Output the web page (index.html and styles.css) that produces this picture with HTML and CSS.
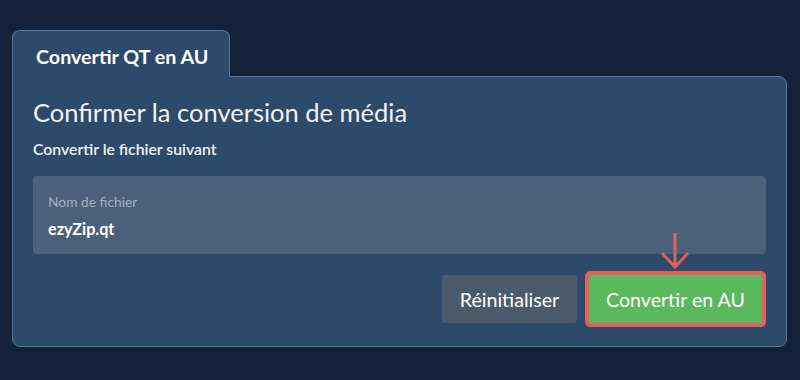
FILE: index.html
```html
<!DOCTYPE html>
<html lang="fr">
<head>
<meta charset="utf-8">
<link rel="stylesheet" href="styles.css">
</head>
<body>
<div class="wrap">
  <div class="tab">Convertir QT en AU</div>
  <div class="panel">
    <h1 class="title">Confirmer la conversion de média</h1>
    <p class="subtitle">Convertir le fichier suivant</p>
    <div class="filebox">
      <div class="label">Nom de fichier</div>
      <div class="value">ezyZip.qt</div>
    </div>
    <div class="actions">
      <button class="btn btn-reset">Réinitialiser</button>
      <div class="convert-wrap">
        <svg class="arrow" width="30" height="38" viewBox="0 0 30 38">
          <path d="M15 1 V35 M2 21 L15 35 L28 21" fill="none" stroke="#e0605a" stroke-width="3"/>
        </svg>
        <button class="btn btn-convert">Convertir en AU</button>
      </div>
    </div>
  </div>
</div>
</body>
</html>
```
FILE: styles.css
```css
html, body {
  margin: 0;
  padding: 0;
  background: #11223a;
  font-family: Lato, "Open Sans", sans-serif;
  color: #ffffff;
}
.wrap {
  padding: 30px 13px 0 12px;
}
.tab {
  position: relative;
  z-index: 2;
  box-sizing: border-box;
  width: 218px;
  height: 47px;
  margin-bottom: -1px;
  padding: 14px 0 0 23px;
  background: #2d4a6b;
  border: 1px solid #5a7595;
  border-bottom: none;
  border-radius: 8px 8px 0 0;
  font-size: 19.7px;
  font-weight: 700;
  line-height: 24px;
  white-space: nowrap;
}
.panel {
  position: relative;
  box-sizing: border-box;
  background: #2d4a6b;
  border: 1px solid #5a7595;
  border-radius: 0 8px 8px 8px;
  padding: 20px 20px 19px 20px;
}
.title {
  margin: 0;
  font-size: 25.5px;
  font-weight: 400;
  line-height: 30px;
  color: #f0f2f5;
}
.subtitle {
  margin: 12px 0 0 0;
  font-size: 15.8px;
  font-weight: 600;
  line-height: 20px;
  color: #f0f2f5;
}
.filebox {
  margin-top: 17px;
  box-sizing: border-box;
  height: 78px;
  background: #4b6079;
  border-radius: 4px;
  padding: 17px 15px 0 15px;
}
.label {
  font-size: 13.8px;
  line-height: 17px;
  color: #a3b0bf;
}
.value {
  margin-top: 9px;
  font-size: 16.2px;
  font-weight: 700;
  line-height: 20px;
}
.actions {
  margin-top: 17px;
  display: flex;
  justify-content: flex-end;
  align-items: center;
  gap: 8px;
}
.btn {
  box-sizing: border-box;
  font-family: Lato, "Open Sans", sans-serif;
  font-size: 19.6px;
  color: #ffffff;
  border: none;
  border-radius: 4px;
  cursor: pointer;
}
.btn-reset {
  width: 135px;
  height: 48px;
  background: #4b5b6c;
}
.convert-wrap {
  position: relative;
}
.btn-convert {
  display: block;
  width: 181px;
  height: 56px;
  background: #5cb85c;
  border: 4px solid #e0605a;
  border-radius: 5px;
}
.arrow {
  position: absolute;
  left: 75px;
  top: -39px;
}
```
